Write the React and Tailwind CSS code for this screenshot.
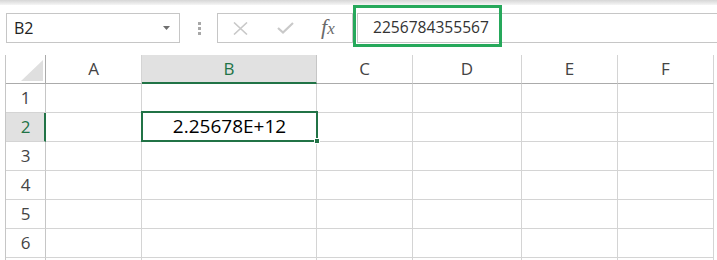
import React from "react";

const cols = [
  { name: "A", w: "w-[96px]" },
  { name: "B", w: "w-[175px]" },
  { name: "C", w: "w-[96px]" },
  { name: "D", w: "w-[109px]" },
  { name: "E", w: "w-[96px]" },
  { name: "F", w: "w-[96px]" },
];

const rows = [1, 2, 3, 4, 5, 6, 7];

const ui = { fontFamily: '"Open Sans", "Noto Sans", sans-serif' };

function Toolbar() {
  return (
    <div className="flex items-center pl-[6px] pt-[8px] pb-[12px]">
      {/* name box */}
      <div className="w-[174px] h-[30px] border border-[#c6c6c6] bg-white flex items-center justify-between pl-[7px] pr-[9px]">
        <span className="text-[16px] text-[#222]">B2</span>
        <svg width="7" height="4" viewBox="0 0 7 4">
          <polygon points="0,0 7,0 3.5,4" fill="#6f6f6f" />
        </svg>
      </div>
      {/* drag dots */}
      <div className="w-[37px] flex flex-col items-center gap-[2px] pl-[1px]">
        <div className="w-[3px] h-[3px] bg-[#a8a8a8]" />
        <div className="w-[3px] h-[3px] bg-[#a8a8a8]" />
        <div className="w-[3px] h-[3px] bg-[#a8a8a8]" />
      </div>
      {/* cancel / enter / fx */}
      <div className="w-[136px] h-[30px] border border-[#c6c6c6] bg-white flex items-center pl-[15px]">
        <svg width="15" height="13" viewBox="0 0 15 13">
          <path d="M1 0.5 L14 12.5 M14 0.5 L1 12.5" stroke="#c9c9c9" strokeWidth="1.6" />
        </svg>
        <svg className="ml-[29px]" width="17" height="12" viewBox="0 0 17 12">
          <path d="M1 6 L6 10.5 L16 1" stroke="#c9c9c9" strokeWidth="2.2" fill="none" />
        </svg>
        <span
          className="ml-[27px] text-[22px] italic text-[#6a6a6a] leading-none pb-[3px]"
          style={{ fontFamily: '"Liberation Serif", serif' }}
        >
          f<span className="text-[17px]">x</span>
        </span>
      </div>
      {/* formula bar */}
      <div className="flex-1 h-[30px] relative">
        <div className="ml-[4px] h-full border-l border-y border-[#c6c6c6] bg-white flex items-center pl-[15px]">
          <span className="text-[15.6px] text-[#333]">2256784355567</span>
        </div>
        <div className="absolute left-0 top-[-8px] w-[149px] h-[42px] border-[3px] border-[#26a85b]" />
      </div>
    </div>
  );
}

function Grid() {
  return (
    <div className="ml-[5px] border-l border-[#c6c6c6]">
      {/* column headers */}
      <div className="flex h-[29px]">
        <div className="w-[40px] border-r border-b border-[#ababab] relative">
          <svg className="absolute left-[15px] top-[5px]" width="22" height="21" viewBox="0 0 22 21">
            <polygon points="22,0 22,21 0,21" fill="#dfdfdf" />
          </svg>
        </div>
        {cols.map((c) =>
          c.name === "B" ? (
            <div
              key={c.name}
              className={`${c.w} border-r border-r-[#c6c6c6] border-b-2 border-b-[#217346] bg-[#e1e1e1] flex items-center justify-center text-[17px] text-[#217346]`}
            >
              {c.name}
            </div>
          ) : (
            <div
              key={c.name}
              className={`${c.w} border-r border-r-[#d4d4d4] border-b border-b-[#ababab] flex items-center justify-center text-[17px] text-[#444]`}
            >
              {c.name}
            </div>
          )
        )}
      </div>
      {/* rows */}
      {rows.map((r) => (
        <div key={r} className="flex h-[29px]">
          {r === 2 ? (
            <div className="w-[40px] border-r-2 border-r-[#217346] border-b border-b-[#d4d4d4] bg-[#e1e1e1] flex items-center justify-center text-[17px] text-[#217346] pl-[1px]">
              {r}
            </div>
          ) : (
            <div className="w-[40px] border-r border-r-[#c6c6c6] border-b border-b-[#d4d4d4] flex items-center justify-center text-[17px] text-[#444]">
              {r < 7 ? r : null}
            </div>
          )}
          {cols.map((c) => (
            <div key={c.name} className={`${c.w} border-r border-b border-[#d4d4d4] relative`}>
              {r === 2 && c.name === "B" && (
                <div className="absolute top-[-2px] left-[-1px] right-[-2px] bottom-[-1px] border-2 border-[#217346] flex items-center justify-center z-10">
                  <span className="text-[19px] text-black">2.25678E+12</span>
                  <div className="absolute right-[-4px] bottom-[-4px] w-[6px] h-[6px] bg-[#217346] border border-white" />
                </div>
              )}
            </div>
          ))}
        </div>
      ))}
    </div>
  );
}

export default function App() {
  return (
    <div className="w-[717px] h-[260px] overflow-hidden bg-white" style={ui}>
      <div className="h-[5px] bg-gradient-to-b from-[#d6d6d6] to-[#f6f6f6]" />
      <Toolbar />
      <Grid />
    </div>
  );
}
